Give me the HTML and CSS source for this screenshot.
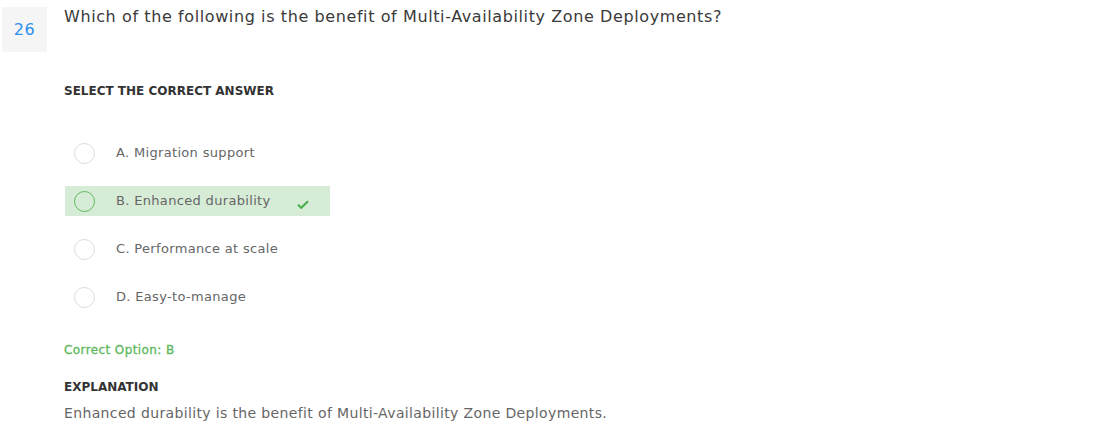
FILE: index.html
```html
<!DOCTYPE html>
<html>
<head>
<meta charset="utf-8">
<link rel="stylesheet" href="styles.css">
</head>
<body>
<div class="question">
  <div class="num">26</div>
  <div class="content">
    <div class="qtext">Which of the following is the benefit of Multi-Availability Zone Deployments?</div>
    <div class="label select">SELECT THE CORRECT ANSWER</div>
    <div class="options">
      <div class="option"><span class="radio"></span><span class="otext">A. Migration support</span></div>
      <div class="option correct"><span class="radio"></span><span class="otext">B. Enhanced durability</span>
        <svg class="check" width="12" height="9" viewBox="0 0 12 9"><path d="M1 4.8 L4.3 7.8 L11 1.2" fill="none" stroke="#4caf50" stroke-width="2.2"/></svg>
      </div>
      <div class="option"><span class="radio"></span><span class="otext">C. Performance at scale</span></div>
      <div class="option"><span class="radio"></span><span class="otext">D. Easy-to-manage</span></div>
    </div>
    <div class="answer">Correct Option: B</div>
    <div class="label expl">EXPLANATION</div>
    <div class="explanation">Enhanced durability is the benefit of Multi-Availability Zone Deployments.</div>
  </div>
</div>
</body>
</html>
```
FILE: styles.css
```css
body {
  margin: 0;
  font-family: "DejaVu Sans", "Open Sans", sans-serif;
  background: #fff;
}
.question {
  display: flex;
  align-items: flex-start;
  padding: 7px 0 0 2px;
}
.num {
  width: 45px;
  height: 45px;
  background: #f5f5f5;
  color: #2d8fee;
  font-size: 16px;
  letter-spacing: 0.5px;
  display: flex;
  align-items: center;
  justify-content: center;
}
.content {
  margin-left: 17px;
}
.qtext {
  font-size: 16px;
  line-height: 20px;
  letter-spacing: 0.6px;
  color: #3a3a3a;
}
.label {
  font-size: 12px;
  font-weight: bold;
  color: #333;
  line-height: 14px;
}
.select {
  margin-top: 57px;
}
.options {
  margin-top: 40px;
  display: flex;
  flex-direction: column;
  gap: 18px;
}
.option {
  display: flex;
  align-items: center;
  height: 30px;
  width: 265px;
  margin-left: 1px;
  padding-left: 9px;
  box-sizing: border-box;
}
.radio {
  width: 21px;
  height: 21px;
  border: 1px solid #dcdcdc;
  border-radius: 50%;
  box-sizing: border-box;
  background: #fff;
  flex: none;
}
.otext {
  margin-left: 21px;
  margin-top: -2px;
  font-size: 13px;
  letter-spacing: 0.33px;
  color: #666;
}
.correct {
  background: #d6ecd6;
}
.correct .radio {
  border-color: #5cb85c;
  background: transparent;
}
.check {
  margin-left: 26px;
  margin-top: 7px;
}
.answer {
  margin-top: 31px;
  font-size: 12px;
  color: #5cb85c;
  letter-spacing: 0.4px;
  -webkit-text-stroke: 0.3px #5cb85c;
  line-height: 14px;
}
.expl {
  margin-top: 23px;
}
.explanation {
  margin-top: 10px;
  font-size: 14px;
  color: #666;
  letter-spacing: 0.36px;
  line-height: 18px;
}
```
